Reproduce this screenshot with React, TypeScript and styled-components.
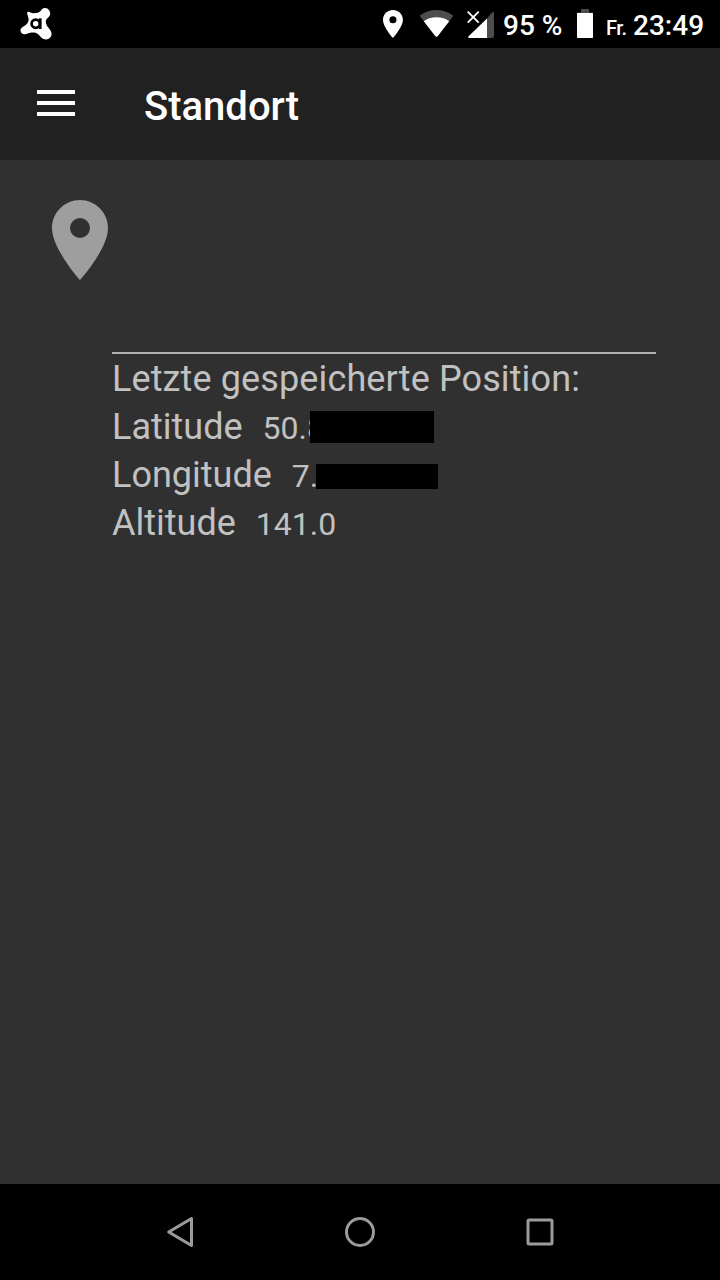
import React from 'react';
import styled, { createGlobalStyle } from 'styled-components';

const GlobalStyle = createGlobalStyle`
  * { box-sizing: border-box; }
  body {
    margin: 0;
    background: #303030;
    font-family: Roboto, "Liberation Sans", sans-serif;
  }
`;

const Screen = styled.div`
  display: flex;
  flex-direction: column;
  width: 720px;
  height: 1280px;
  overflow: hidden;
  background: #303030;
`;

const StatusBar = styled.header`
  display: flex;
  flex: none;
  align-items: flex-start;
  height: 48px;
  padding: 0 16px 0 20px;
  background: #000;
  color: #fff;
`;

const StatusIcon = styled.svg<{ $gap?: number }>`
  display: block;
  flex: none;
  margin-left: ${(p) => p.$gap ?? 0}px;
`;

const StatusGroup = styled.div`
  display: flex;
  margin-left: auto;
`;

const StatusText = styled.span<{ $width: number; $gap: number; $small?: boolean }>`
  width: ${(p) => p.$width}px;
  margin-left: ${(p) => p.$gap}px;
  font-size: ${(p) => (p.$small ? 20 : 28)}px;
  font-weight: 500;
  letter-spacing: ${(p) => (p.$small ? '-0.5px' : 'normal')};
  line-height: ${(p) => (p.$small ? 56 : 52)}px;
  white-space: nowrap;
`;

const AppBar = styled.div`
  display: flex;
  flex: none;
  align-items: center;
  height: 112px;
  padding-left: 37px;
  background: #212121;
`;

const MenuButton = styled.button`
  display: flex;
  flex-direction: column;
  gap: 7px;
  width: 38px;
  padding: 0;
  margin: 0 69px 2px 0;
  border: 0;
  background: none;
`;

const MenuLine = styled.span`
  height: 4px;
  background: #fff;
`;

const Title = styled.h1`
  margin: 6px 0 0;
  color: #fff;
  font-size: 40px;
  font-weight: 500;
  line-height: 48px;
`;

const Content = styled.main`
  flex: 1;
  padding: 32px 64px 0 32px;
`;

const PlaceIcon = styled.svg`
  display: block;
`;

const Details = styled.section`
  margin: 64px 0 0 80px;
  border-top: 2px solid #afafaf;
  padding-top: 1px;
  color: #c1c1c1;
`;

const Row = styled.div`
  position: relative;
  display: flex;
  align-items: baseline;
  height: 48px;
  font-size: 36px;
  line-height: 48px;
  white-space: nowrap;
`;

const Heading = styled.span`
  letter-spacing: 0.12px;
`;

const Value = styled.span`
  margin-left: 20px;
  font-size: 32px;
`;

const Redaction = styled.span<{ $x: number; $y: number; $w: number; $h: number }>`
  position: absolute;
  left: ${(p) => p.$x}px;
  top: ${(p) => p.$y}px;
  width: ${(p) => p.$w}px;
  height: ${(p) => p.$h}px;
  background: #000;
`;

const NavBar = styled.nav`
  display: flex;
  flex: none;
  justify-content: center;
  height: 96px;
  background: #000;
`;

const NavButton = styled.button`
  display: flex;
  align-items: center;
  justify-content: center;
  width: 180px;
  padding: 0;
  border: 0;
  background: none;
`;

const PIN =
  'M12 2C8.13 2 5 5.13 5 9c0 5.25 7 13 7 13s7-7.75 7-13c0-3.87-3.13-7-7-7zm0 9.5a2.5 2.5 0 1 1 0-5 2.5 2.5 0 0 1 0 5z';

export default function App() {
  return (
    <>
      <GlobalStyle />
      <Screen>
        <StatusBar>
          <StatusIcon width="34" height="48" viewBox="20 0 34 48">
            <path
              fill="#fff"
              d="M27.5 12C29 11.3 31 13.3 34 13.2C38 13.1 39.5 12.7 41.5 9.8C43.4 7.2 47.5 7.6 49.3 10.5C51 13.4 50.2 16 47.7 17.9C45.2 20 45.4 22.5 46.7 25.2C48 27.8 50.2 29 51.2 32C52.6 36.3 49.4 39.6 45.8 39.4C42.4 39.2 40.8 36.8 39 34.9C36.8 32.7 33.7 32.3 30.5 32.7C28.2 33 26.700 34.500 24.200 34.200C20.500 33.800 19.200 29.800 22 27.600C24.700 25.600 27.700 24.300 28.500 20.800C29.300 17.200 26 13.500 27.500 12Z"
            />
            <circle cx="35.7" cy="23.7" r="4.1" fill="none" stroke="#000" strokeWidth="2.7" />
            <path d="M40.2 18.3V29" stroke="#000" strokeWidth="2.8" />
          </StatusIcon>
          <StatusGroup>
            <StatusIcon width="34" height="48" viewBox="376 0 34 48">
              <path fill="#fff" transform="translate(375.9 7.2) scale(1.42 1.4)" d={PIN} />
            </StatusIcon>
            <StatusIcon width="36" height="48" viewBox="418 0 36 48" $gap={8}>
              <path
                fill="#4d4d4d"
                d="M419.6 15.7C429.3 8.1 443.7 8.1 453.4 15.7L438 35.8Q436.5 37.8 435 35.8Z"
              />
              <path
                fill="#fff"
                d="M423.8 21.2C430.3 15.9 442.7 15.9 449.2 21.2L438 35.8Q436.5 37.8 435 35.8Z"
              />
            </StatusIcon>
            <StatusIcon width="28" height="48" viewBox="467 0 28 48" $gap={13}>
              <path
                fill="#4d4d4d"
                d="M487 18.5L491.8 12.8Q494 11 494 13.5V36Q494 38 492 38H487Z"
              />
              <path fill="#fff" d="M487 18.5V38H469.5Q467 38 468.6 36.3Z" />
              <path d="M467.7 11.7L478.7 22.7M478.7 11.7L467.7 22.7" stroke="#fff" strokeWidth="1.8" />
            </StatusIcon>
            <StatusText $gap={8} $width={60}>95 %</StatusText>
            <StatusIcon width="18" height="48" viewBox="576 0 18 48" $gap={13}>
              <path fill="#4d4d4d" d="M581 9h8v3.5h4V14h-16v-1.5h4z" />
              <rect x="577" y="13" width="16" height="25" rx="0.7" fill="#fff" />
            </StatusIcon>
            <StatusText $gap={12} $width={27} $small>Fr.</StatusText>
            <StatusText $gap={0} $width={71}>23:49</StatusText>
          </StatusGroup>
        </StatusBar>

        <AppBar>
          <MenuButton aria-label="Menü">
            <MenuLine />
            <MenuLine />
            <MenuLine />
          </MenuButton>
          <Title>Standort</Title>
        </AppBar>

        <Content>
          <PlaceIcon width="96" height="96" viewBox="0 0 24 24">
            <path fill="#9e9e9e" d={PIN} />
          </PlaceIcon>
          <Details>
            <Row>
              <Heading>Letzte gespeicherte Position:</Heading>
            </Row>
            <Row>
              Latitude<Value>50.8</Value>
              <Redaction $x={198} $y={8} $w={124} $h={32} />
            </Row>
            <Row>
              Longitude<Value>7.</Value>
              <Redaction $x={204} $y={13} $w={122} $h={25} />
            </Row>
            <Row>
              Altitude<Value>141.0</Value>
            </Row>
          </Details>
        </Content>

        <NavBar>
          <NavButton aria-label="Zurück">
            <svg width="32" height="32" viewBox="0 0 32 32">
              <path
                d="M27.5 2.5V29.5L4.7 16Z"
                fill="none"
                stroke="#9b9b9b"
                strokeWidth="3"
                strokeLinejoin="round"
              />
            </svg>
          </NavButton>
          <NavButton aria-label="Startseite">
            <svg width="32" height="32" viewBox="0 0 32 32">
              <circle cx="16" cy="16" r="13.5" fill="none" stroke="#9b9b9b" strokeWidth="3" />
            </svg>
          </NavButton>
          <NavButton aria-label="Übersicht">
            <svg width="32" height="32" viewBox="0 0 32 32">
              <rect x="4" y="4" width="24" height="24" rx="1" fill="none" stroke="#9b9b9b" strokeWidth="3" />
            </svg>
          </NavButton>
        </NavBar>
      </Screen>
    </>
  );
}
